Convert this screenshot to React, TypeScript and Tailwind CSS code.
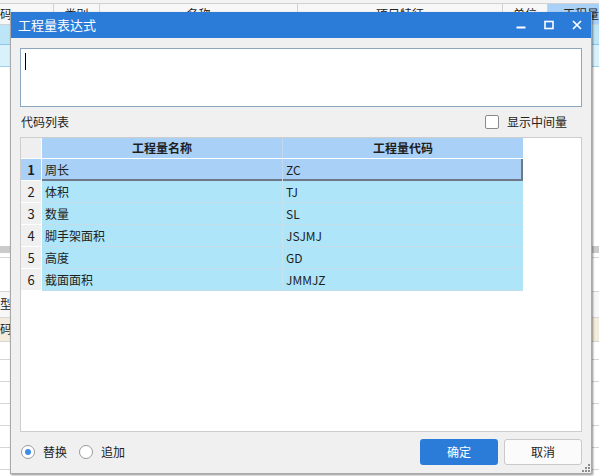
import React from 'react';

const rows = [
  { no: '1', name: '周长', code: 'ZC' },
  { no: '2', name: '体积', code: 'TJ' },
  { no: '3', name: '数量', code: 'SL' },
  { no: '4', name: '脚手架面积', code: 'JSJMJ' },
  { no: '5', name: '高度', code: 'GD' },
  { no: '6', name: '截面面积', code: 'JMMJZ' },
];

function Backdrop() {
  return (
    <div className="flex h-full flex-col text-[12px] text-[#222]">
      <div className="h-[3px] bg-[#f3f3f3]" />
      <div className="flex h-[22px] border-y border-[#d2d2d2] bg-[#f7f7f7] leading-[20px]">
        <div className="w-[54px] border-r border-[#d2d2d2]">码</div>
        <div className="w-[46px] border-r border-[#d2d2d2] text-center">类别</div>
        <div className="w-[198px] border-r border-[#d2d2d2] text-center">名称</div>
        <div className="w-[205px] border-r border-[#d2d2d2] text-center">项目特征</div>
        <div className="w-[45px] border-r border-[#d2d2d2] text-center">单位</div>
        <div className="flex-1 bg-[#a9d0f7] pl-[15px]">工程量</div>
      </div>
      <div className="h-[20px] border-b border-[#8fc6e8] bg-[#bde5f8]" />
      <div className="h-[22px] border-b border-[#9fd0ec] bg-[#d8f1fb]" />
      <div className="flex-1 bg-white" />
      <div className="h-[7px] bg-[#cbcbcb]" />
      <div className="h-[5px] border-b border-[#d6d6d6] bg-white" />
      <div className="h-[34px] border-b border-[#d6d6d6] bg-white" />
      <div className="h-[26px] border-b border-[#d6d6d6] bg-[#f7f7f7] leading-[24px]">型</div>
      <div className="h-[24px] border-b border-[#d6d6d6] bg-[#f3ecdc] leading-[22px]">码</div>
      <div className="h-[18px] border-b border-[#d6d6d6]" />
      <div className="h-[22px] border-b border-[#d6d6d6]" />
      <div className="h-[22px] border-b border-[#d6d6d6]" />
      <div className="h-[22px] border-b border-[#d6d6d6]" />
      <div className="h-[22px] border-b border-[#d6d6d6]" />
      <div className="h-[22px] border-b border-[#d6d6d6]" />
      <div className="h-[6px]" />
    </div>
  );
}

function Radio({ checked, label }: { checked?: boolean; label: string }) {
  return (
    <div className="flex items-center gap-[8px]">
      <div className="flex h-[14px] w-[14px] items-center justify-center rounded-full border border-[#9a9a9a] bg-white">
        {checked && <div className="h-[6px] w-[6px] rounded-full bg-[#3d8de6]" />}
      </div>
      <span className="text-[12px] leading-[16px] text-[#222]">{label}</span>
    </div>
  );
}

export default function App() {
  return (
    <div className="relative h-[476px] w-[599px] overflow-hidden bg-white font-['Noto_Sans_CJK_SC','Microsoft_YaHei',sans-serif]">
      <Backdrop />

      {/* dialog */}
      <div className="absolute left-[10px] top-[12px] flex h-[462px] w-[582px] flex-col border-x border-b border-[#a9a9a9] bg-[#f0f0f0] shadow-[1px_1px_2px_rgba(0,0,0,0.45)]">
        <div className="flex h-[26px] items-center justify-between bg-[#2b7bd9] text-white">
          <span className="pl-[7px] text-[13px] leading-[18px]">工程量表达式</span>
          <div className="flex h-full items-center">
            <div className="flex w-[28px] justify-center">
              <svg width="10" height="10" viewBox="0 0 10 10">
                <rect x="0.5" y="6.5" width="9" height="2" fill="white" />
              </svg>
            </div>
            <div className="flex w-[28px] justify-center">
              <svg width="10" height="10" viewBox="0 0 10 10">
                <rect x="1" y="1.5" width="8" height="7" fill="none" stroke="white" strokeWidth="1.6" />
              </svg>
            </div>
            <div className="flex w-[28px] justify-center">
              <svg width="10" height="10" viewBox="0 0 10 10">
                <path d="M1 1 L9 9 M9 1 L1 9" stroke="white" strokeWidth="1.7" />
              </svg>
            </div>
          </div>
        </div>

        <div className="flex flex-1 flex-col px-[9px] pt-[10px]">
          <div className="h-[59px] border border-[#8ca6c0] bg-white">
            <div className="ml-[4px] mt-[4px] h-[17px] w-px bg-black" />
          </div>

          <div className="flex h-[30px] items-center justify-between pl-[1px] pr-[15px]">
            <span className="text-[12px] leading-[16px] text-[#222]">代码列表</span>
            <div className="flex items-center gap-[8px]">
              <div className="h-[14px] w-[14px] rounded-[2px] border border-[#8a8a8a] bg-white" />
              <span className="text-[12px] leading-[16px] text-[#222]">显示中间量</span>
            </div>
          </div>

          <div className="h-[295px] border border-[#cdcdcd] bg-white text-[12px] text-[#1e1e1e]">
            <div className="flex h-[20px] font-bold leading-[20px]">
              <div className="w-[21px] border-r border-white bg-[#efefef]" />
              <div className="w-[241px] border-r border-[#c4d9ee] bg-[#a9d0f7] text-center">工程量名称</div>
              <div className="w-[240px] bg-[#a9d0f7] text-center">工程量代码</div>
            </div>
            <div className="h-px w-[502px] bg-white" />
            {rows.map((r, i) => {
              const sel = i === 0;
              return (
                <div key={r.no} className="flex h-[22px] leading-[21px]">
                  <div
                    className={
                      sel
                        ? 'w-[21px] border-b border-r border-white bg-[#a9d0f7] text-center text-[13px] font-bold'
                        : 'w-[21px] border-b border-r border-white bg-[#f0f0f0] text-center text-[13px]'
                    }
                  >
                    {r.no}
                  </div>
                  {sel ? (
                    <div className="flex w-[481px] bg-[#a9d0f7] shadow-[inset_-2px_-2px_0_#6d7986]">
                      <div className="w-[241px] border-r border-[#c4d9ee] pl-[3px]">{r.name}</div>
                      <div className="w-[240px] pl-[3px]">{r.code}</div>
                    </div>
                  ) : (
                    <div className="flex w-[481px] border-b border-[#c3dde8] bg-[#aee5f8]">
                      <div className="w-[241px] border-r border-[#c9e3ee] pl-[3px]">{r.name}</div>
                      <div className="w-[240px] pl-[3px]">{r.code}</div>
                    </div>
                  )}
                </div>
              );
            })}
          </div>

          <div className="mt-[7px] flex h-[26px] items-center justify-between">
            <div className="flex items-center gap-[12px] pl-[1px]">
              <Radio checked label="替换" />
              <Radio label="追加" />
            </div>
            <div className="flex gap-[6px]">
              <button className="h-[26px] w-[78px] rounded-[3px] bg-[#2b7bd9] text-[12px] text-white">确定</button>
              <button className="h-[26px] w-[78px] rounded-[3px] border border-[#c9c9c9] bg-[#fbfbfb] text-[12px] text-[#222]">
                取消
              </button>
            </div>
          </div>
        </div>

        <svg className="absolute bottom-[1px] right-[1px]" width="8" height="8" viewBox="0 0 8 8">
          <rect x="6" y="0" width="2" height="2" fill="#8c8c8c" />
          <rect x="3" y="3" width="2" height="2" fill="#8c8c8c" />
          <rect x="6" y="3" width="2" height="2" fill="#8c8c8c" />
          <rect x="0" y="6" width="2" height="2" fill="#8c8c8c" />
          <rect x="3" y="6" width="2" height="2" fill="#8c8c8c" />
          <rect x="6" y="6" width="2" height="2" fill="#8c8c8c" />
        </svg>
      </div>
    </div>
  );
}
